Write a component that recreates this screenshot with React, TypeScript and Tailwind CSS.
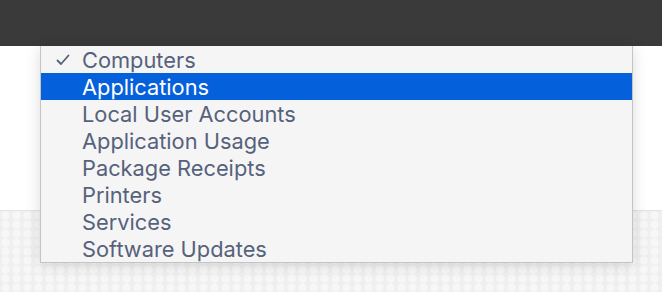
import React from 'react';

const items = [
  'Computers',
  'Applications',
  'Local User Accounts',
  'Application Usage',
  'Package Receipts',
  'Printers',
  'Services',
  'Software Updates',
];

const App: React.FC = () => {
  const selected = 'Computers';
  const active = 'Applications';

  return (
    <div className="w-[662px] h-[292px] overflow-hidden bg-white font-['Inter',sans-serif]">
      {/* Top bar */}
      <div className="h-[46px] bg-[#3a3a3a]" />

      <div className="relative h-[246px]">
        <div className="h-[164px] bg-white" />
        <div className="h-[82px] border-t border-[#e4e4e4] bg-[#efefef] bg-[radial-gradient(circle,#f7f7f7_50%,transparent_65%)] bg-[length:11px_9px]" />

        {/* Dropdown menu */}
        <ul className="absolute left-[40px] top-0 w-[593px] bg-[#f5f5f5] border-l border-r border-b border-[#c4c4c4] shadow-[0_2px_14px_rgba(0,0,0,0.14)]">
          {items.map((item) => (
            <li
              key={item}
              className={`flex items-center h-[27px] text-[21.8px] leading-none ${
                item === active ? 'bg-[#0560dc] text-white' : 'text-[#56627c]'
              }`}
            >
              <span className="w-[42px] flex justify-center pl-[2px]">
                {item === selected && (
                  <svg width="14" height="12" viewBox="0 0 14 12" fill="none">
                    <path d="M1.5 6.5 L5 10 L12.5 1.5" stroke="#56627c" strokeWidth="1.8" strokeLinecap="round" strokeLinejoin="round" />
                  </svg>
                )}
              </span>
              <span className="-ml-[1px] pt-[2px]">{item}</span>
            </li>
          ))}
        </ul>
      </div>
    </div>
  );
};

export default App;
